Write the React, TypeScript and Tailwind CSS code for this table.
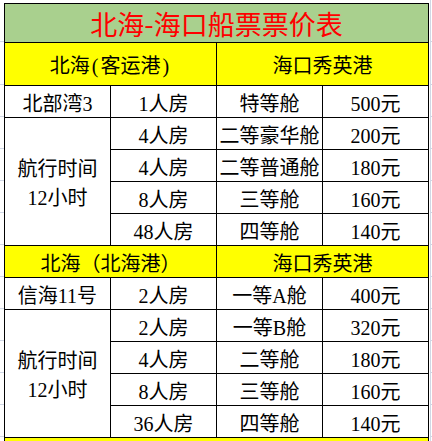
import { Fragment } from 'react';

const body = 'font-["Liberation_Serif","Noto_Sans_CJK_SC",serif]';

type Section = {
  left: React.ReactNode;
  right: string;
  ship: string;
  first: [string, string, string];
  rows: [string, string, string][];
};

const sections: Section[] = [
  {
    left: (
      <>
        北海<span className="px-[2px]">(</span>客运港<span className="px-[2px]">)</span>
      </>
    ),
    right: '海口秀英港',
    ship: '北部湾3',
    first: ['1人房', '特等舱', '500元'],
    rows: [
      ['4人房', '二等豪华舱', '200元'],
      ['4人房', '二等普通舱', '180元'],
      ['8人房', '三等舱', '160元'],
      ['48人房', '四等舱', '140元'],
    ],
  },
  {
    left: '北海（北海港）',
    right: '海口秀英港',
    ship: '信海11号',
    first: ['2人房', '一等A舱', '400元'],
    rows: [
      ['2人房', '一等B舱', '320元'],
      ['4人房', '二等舱', '180元'],
      ['8人房', '三等舱', '160元'],
      ['36人房', '四等舱', '140元'],
    ],
  },
];

// row heights incl. bottom border, used by the grey gridline gutters too
const rowHeights = [39, 43, 32, 32, 32, 32, 32, 32, 32, 32, 32, 32, 32, 32];

function Cell({
  children,
  className = '',
}: {
  children: React.ReactNode;
  className?: string;
}) {
  return (
    <div
      className={`flex items-center justify-center border-r border-b border-black pt-[4px] text-[20px] whitespace-nowrap text-black ${body} ${className}`}
    >
      {children}
    </div>
  );
}

function Gutter({ side }: { side: 'left' | 'right' }) {
  return (
    <div
      className={`flex flex-col pt-[3px] ${
        side === 'right' ? 'ml-[1px] w-[2px] border-l border-[#d0d7e5]' : 'w-[4px]'
      }`}
    >
      <div className="h-[1px]" />
      {rowHeights.map((h, i) => (
        <div
          key={i}
          className="shrink-0 border-b border-[#d0d7e5]"
          style={{ height: h }}
        />
      ))}
    </div>
  );
}

export default function App() {
  return (
    <div className="flex h-[441px] w-[432px] overflow-hidden bg-white">
      <Gutter side="left" />
      <div className="mt-[3px] grid w-[425px] shrink-0 grid-cols-[repeat(4,106px)] grid-rows-[39px_43px_repeat(12,32px)] self-start border-t border-l border-black">
        <div className='col-span-4 flex items-center justify-center border-r border-b border-black bg-[#a9d08e] text-[27px] leading-none text-[#ff0000] font-["Noto_Sans_CJK_SC",sans-serif]'>
          北海-海口船票票价表
        </div>
        {sections.map((s, si) => (
          <Fragment key={si}>
            <Cell className="col-span-2 bg-[#ffff00] leading-none">{s.left}</Cell>
            <Cell className="col-span-2 bg-[#ffff00] leading-none">{s.right}</Cell>
            <Cell className="leading-none">{s.ship}</Cell>
            {s.first.map((t, i) => (
              <Cell key={i} className="leading-none">
                {t}
              </Cell>
            ))}
            <Cell className="row-span-4 flex-col leading-[29px]">
              <span>航行时间</span>
              <span>12小时</span>
            </Cell>
            {s.rows.map((r, ri) =>
              r.map((t, i) => (
                <Cell key={`${ri}-${i}`} className="leading-none">
                  {t}
                </Cell>
              )),
            )}
          </Fragment>
        ))}
        <div className="col-span-4 border-r border-black bg-[#ffff00]" />
      </div>
      <Gutter side="right" />
    </div>
  );
}
